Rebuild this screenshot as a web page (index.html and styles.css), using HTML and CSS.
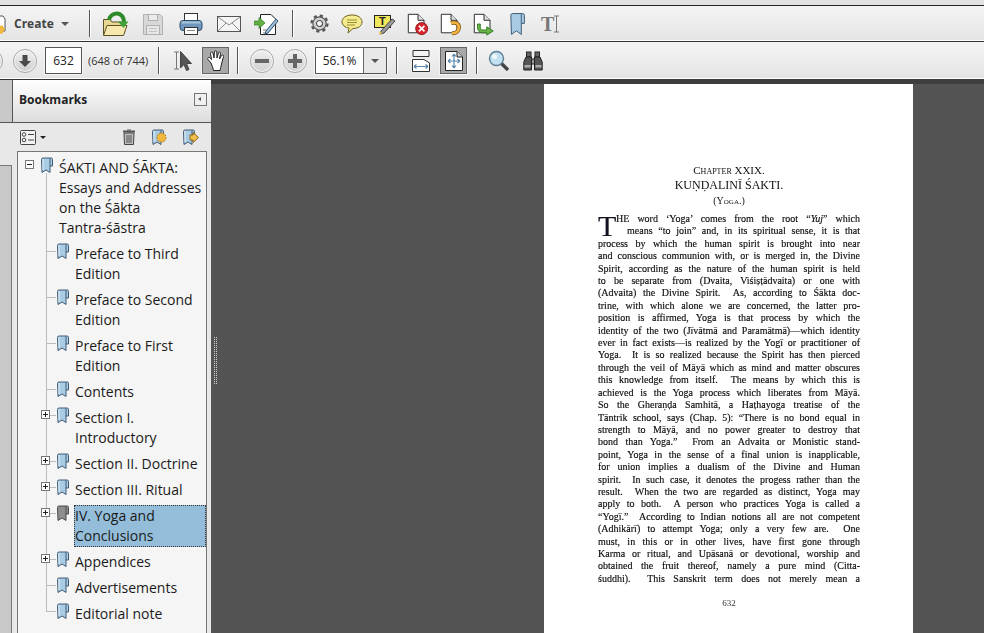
FILE: index.html
```html
<!DOCTYPE html>
<html>
<head>
    <title>Bookmarks viewer</title>
    <link rel="stylesheet" href="styles.css">
</head>
<body>
    <svg class="sprite">
        <symbol id="mark" viewBox="0 0 13 17">
            <path d="M1.5 2.5 Q1.5 1 3 1 H11 Q12.5 1 12.5 2.5 V9 H10 V15.5 L6 13 L2 15.5 Z" fill="#a9cbe4" stroke="#3f5a75"/>
            <path d="M10 1.5 V9" stroke="#3f5a75" fill="none"/>
            <path d="M3 2 V13" stroke="#e3f0f8" fill="none"/>
        </symbol>
        <symbol id="mark-grey" viewBox="0 0 13 17">
            <path d="M1.5 2.5 Q1.5 1 3 1 H11 Q12.5 1 12.5 2.5 V9 H10 V15.5 L6 13 L2 15.5 Z" fill="#8e8e8e" stroke="#4a4a4a"/>
            <path d="M10 1.5 V9" stroke="#4a4a4a" fill="none"/>
        </symbol>
        <symbol id="doc" viewBox="0 0 26 26">
            <path d="M2.5 2.5 H13 L19.5 9 V22.5 H2.5 Z" fill="#fff" stroke="#222"/>
            <path d="M13 2.5 V9 H19.5" fill="#ddd" stroke="#222"/>
        </symbol>
    </svg>

    <div class="topstrip"></div>

    <!-- Main toolbar -->
    <div class="toolbar">
        <svg class="create-icon" width="6" height="26" viewBox="0 0 6 26">
            <path d="M-6 5 H3 L5 8 V20 H-6 Z" fill="#fff" stroke="#555"/>
            <path d="M-2 16 L2 14 L5 18 L2 23 L-2 22 Z" fill="#f0b83c"/>
        </svg>
        <span class="create-label">Create</span>
        <span class="caret caret-create"></span>
        <span class="sep sep-create"></span>

        <span class="slot wide">
            <svg width="28" height="28" viewBox="0 0 28 28">
                <path d="M2.5 25 V9.5 H9 L11 12 H22 V16" fill="#e8d894" stroke="#5d5124"/>
                <path d="M2.5 25.5 L6 15.5 H26 L22.5 25.5 Z" fill="#f6e8ae" stroke="#5d5124"/>
                <path d="M8 10 C9 4 17 1 21 6 C23 8 23 11 23 13" fill="none" stroke="#2f8a2c" stroke-width="4"/>
                <path d="M17 11.5 H27.5 L22.5 18 Z" fill="#3ea437"/>
            </svg>
        </span>
        <span class="slot wide">
            <svg width="22" height="24" viewBox="0 0 22 24">
                <path d="M1.5 2.5 H18 L20.5 5 V22.5 H1.5 Z" fill="#d8d8d8" stroke="#b0b0b0"/>
                <rect x="6.5" y="2.5" width="9" height="6" fill="#ececec" stroke="#b0b0b0"/>
                <rect x="4.5" y="13.5" width="13" height="9" fill="#e6e6e6" stroke="#b0b0b0"/>
                <path d="M7 16.5 H15 M7 19.5 H15" stroke="#c4c4c4"/>
            </svg>
        </span>
        <span class="slot wide">
            <svg width="24" height="24" viewBox="0 0 24 24">
                <rect x="5.5" y="1.5" width="13" height="9" fill="#fff" stroke="#333"/>
                <rect x="1" y="8.5" width="22" height="10" rx="3" fill="#6f97bb" stroke="#2f4d69"/>
                <rect x="2.5" y="9.5" width="19" height="2" fill="#a8c5dc"/>
                <rect x="5.5" y="15.5" width="13" height="7" fill="#fff" stroke="#333"/>
                <path d="M8 18.5 H16" stroke="#888"/>
            </svg>
        </span>
        <span class="slot wide">
            <svg width="24" height="18" viewBox="0 0 24 18">
                <rect x="0.5" y="1.5" width="23" height="15" fill="#f4f4f4" stroke="#555"/>
                <path d="M1 2 L12 10 L23 2 M1 16 L9 8 M23 16 L15 8" fill="none" stroke="#8c8c8c"/>
            </svg>
        </span>
        <span class="slot wide-short">
            <svg width="24" height="24" viewBox="0 0 24 24">
                <path d="M6.5 2.5 H17 L21.5 7 V22.5 H6.5 Z" fill="#fff" stroke="#222"/>
                <path d="M0 9 H5 V5.5 L11 11 L5 16.5 V13 H0 Z" fill="#63b044" stroke="#2e7a22" stroke-width="0.7"/>
                <path d="M12 19 L22 7 L24 9 L14 21 L11 22 Z" fill="#9cc0dc" stroke="#35516e"/>
                <path d="M9 18 H13 M9 21 H11" stroke="#777"/>
            </svg>
        </span>
        <span class="sep sep-tools"></span>

        <span class="slot">
            <svg width="19" height="19" viewBox="0 0 20 20">
                <circle cx="10" cy="10" r="7" fill="#d2d2d2" stroke="#555" stroke-width="1.2"/>
                <circle cx="10" cy="10" r="8.4" fill="none" stroke="#555" stroke-width="2.4" stroke-dasharray="3.3 3.3"/>
                <circle cx="10" cy="10" r="3.2" fill="#f4f4f4" stroke="#555" stroke-width="1.2"/>
            </svg>
        </span>
        <span class="slot">
            <svg width="22" height="20" viewBox="0 0 22 20">
                <path d="M11 1 C17 1 21 4 21 8 C21 12 17 14.500 12 14.500 L7 19 L8 14 C4 13.500 1 11 1 8 C1 4 5 1 11 1 Z" fill="#f6ea8e" stroke="#6b6420"/>
                <path d="M6 6 H16 M6 8.500 H16 M6 11 H14" stroke="#9a8f35"/>
            </svg>
        </span>
        <span class="slot">
            <svg width="22" height="22" viewBox="0 0 22 22">
                <rect x="0.5" y="2.5" width="16" height="12" fill="#f2e85c" stroke="#222"/>
                <text class="note-t" x="5" y="12">T</text>
                <path d="M7 18 L18 6 L21 8 L10 20 L6 21 Z" fill="#9a9a9a" stroke="#444"/>
                <path d="M6 18 L8 21 L5 21.500 Z" fill="#eec23f"/>
            </svg>
        </span>
        <span class="slot">
            <svg width="24" height="24" viewBox="0 0 26 26">
                <use href="#doc"/>
                <circle cx="17" cy="18" r="6.500" fill="#d9262c" stroke="#8e1217"/>
                <path d="M14 15 L20 21 M20 15 L14 21" stroke="#fff" stroke-width="1.800"/>
            </svg>
        </span>
        <span class="slot">
            <svg width="24" height="24" viewBox="0 0 26 26">
                <use href="#doc"/>
                <path d="M13 12 C19 10 23 14 21 19 C20 22 17 23 14 23" fill="none" stroke="#8a5a14" stroke-width="4.500"/>
                <path d="M13 12 C19 10 23 14 21 19 C20 22 17 23 14 23" fill="none" stroke="#f2b544" stroke-width="2.800"/>
            </svg>
        </span>
        <span class="slot">
            <svg width="24" height="24" viewBox="0 0 26 26">
                <use href="#doc"/>
                <path d="M9 13 V17 C9 19 11 19.500 13 19.500 H16 V16 L23 20.500 L16 25 V22.500 H12 C8 22.500 6 20 6 17 V13 Z" fill="#69b548" stroke="#2f7a23"/>
            </svg>
        </span>
        <span class="slot">
            <svg width="16" height="24" viewBox="0 0 13 19">
                <path d="M1.500 2.500 Q1.500 1 3 1 H11 Q12.500 1 12.500 2.500 V9 H10 V18 L6 15 L2 18 Z" fill="#a9cbe4" stroke="#3f5a75" stroke-width="0.800"/>
                <path d="M10 1.500 V9" stroke="#3f5a75" stroke-width="0.800"/>
            </svg>
        </span>
        <span class="slot">
            <svg width="20" height="20" viewBox="0 0 20 20">
                <text class="tool-t" x="1" y="17">T</text>
                <path d="M14 2 H19 M16.500 2 V18 M14 18 H19" stroke="#777" fill="none"/>
            </svg>
        </span>
    </div>

    <!-- Page navigation toolbar -->
    <div class="toolbar navbar">
        <span class="round round-cut"></span>
        <span class="round round-down">
            <svg width="14" height="14" viewBox="0 0 14 14"><path d="M4.500 1 H9.500 V7 H13 L7 13 L1 7 H4.500 Z" fill="#4a4a4a"/></svg>
        </span>
        <span class="field page-field">632</span>
        <span class="page-count">(648 of 744)</span>
        <span class="sep sep-count"></span>
        <span class="slot select-slot">
            <svg width="20" height="22" viewBox="0 0 20 22">
                <path d="M1 2 H6 M3.500 2 V19 M1 19 H6" fill="none" stroke="#777"/>
                <path d="M7.500 1.500 V18 L11 14.500 L13.500 20.500 L16 19.500 L13.500 13.500 H18.500 Z" fill="#555" stroke="#444"/>
            </svg>
        </span>
        <span class="pressed hand-btn">
            <svg width="20" height="22" viewBox="0 0 20 22">
                <path d="M5 13 L2 9.500 C1 8 3 6.500 4.200 8 L5.500 9.500 L4.500 3.500 C4.500 2 6.500 1.500 7 3 L8 8 L8.500 1.800 C8.700 0.500 10.500 0.500 10.800 1.800 L11 8 L12.500 2.800 C13 1.500 14.800 2 14.500 3.500 L13.500 9 L15.500 5.500 C16.300 4.500 18 5.200 17.500 6.500 L15.500 14 C15 17 14.500 18 14 20.500 H7.500 C7 18 6.200 15.500 5 13 Z" fill="#fff" stroke="#222"/>
            </svg>
        </span>
        <span class="sep sep-hand"></span>
        <span class="round round-minus"><span class="glyph-minus"></span></span>
        <span class="round round-plus"><span class="glyph-minus"></span><span class="glyph-plus"></span></span>
        <span class="zoom-box">
            <span class="zoom-value">56.1%</span>
            <span class="zoom-drop"><span class="caret"></span></span>
        </span>
        <span class="sep sep-zoom"></span>
        <span class="slot fit-slot">
            <svg width="18" height="22" viewBox="0 0 18 22">
                <path d="M1 0.500 H17 V6.500 H1 Z" fill="#f4f4f4" stroke="#333"/>
                <path d="M0.500 9.500 H12 L17.500 13 V21.500 H0.500 Z" fill="#fff" stroke="#333"/>
                <path d="M2 16.500 H16 M2 16.500 L4.500 14.500 M2 16.500 L4.500 18.500 M16 16.500 L13.500 14.500 M16 16.500 L13.500 18.500" fill="none" stroke="#5a86ad" stroke-width="1.200"/>
            </svg>
        </span>
        <span class="pressed fit-btn">
            <svg width="18" height="20" viewBox="0 0 18 20">
                <path d="M0.500 0.500 H12 L17.500 6 V19.500 H0.500 Z" fill="#fff" stroke="#222"/>
                <path d="M12 0.500 V6 H17.500" fill="#ccc" stroke="#222"/>
                <path d="M9 3 V17 M3 10 H15 M9 3 L7 5.500 M9 3 L11 5.500 M9 17 L7 14.500 M9 17 L11 14.500 M3 10 L5.500 8 M3 10 L5.500 12 M15 10 L12.500 8 M15 10 L12.500 12" fill="none" stroke="#5a86ad" stroke-width="1.200"/>
            </svg>
        </span>
        <span class="sep sep-fit"></span>
        <span class="slot find-slot">
            <svg width="22" height="22" viewBox="0 0 22 22">
                <path d="M13 13 L20 20" stroke="#444" stroke-width="3.400"/>
                <circle cx="8.500" cy="8.500" r="7" fill="#c2e2f2" stroke="#5d7e94" stroke-width="1.400"/>
                <circle cx="6.500" cy="6.500" r="2.500" fill="#eef8fc"/>
            </svg>
        </span>
        <span class="slot binoc-slot">
            <svg width="20" height="20" viewBox="0 0 20 20">
                <rect x="3.500" y="1" width="4.500" height="5" fill="#666" stroke="#222"/>
                <rect x="12" y="1" width="4.500" height="5" fill="#666" stroke="#222"/>
                <path d="M3 6 H8.500 V19 H0.800 V11 Z M17 6 H11.500 V19 H19.200 V11 Z" fill="#555" stroke="#222"/>
                <rect x="8.500" y="8" width="3" height="5" fill="#999" stroke="#222"/>
                <rect x="1.500" y="14" width="6" height="2.500" fill="#aaa"/>
                <rect x="12.500" y="14" width="6" height="2.500" fill="#aaa"/>
            </svg>
        </span>
    </div>

    <div class="main">
        <div class="rail">
            <div class="rail-top"></div>
            <div class="rail-gap"></div>
            <div class="rail-tab"></div>
        </div>

        <div class="panel">
            <div class="panel-head">
                <span class="panel-title">Bookmarks</span>
                <span class="collapse-btn"></span>
            </div>
            <div class="panel-tools">
                <span class="options-btn">
                    <svg width="16" height="15" viewBox="0 0 16 15">
                        <rect x="0.500" y="0.500" width="15" height="14" rx="1" fill="#f2f2f2" stroke="#444"/>
                        <circle cx="4" cy="4.500" r="1.800" fill="none" stroke="#444"/>
                        <circle cx="4" cy="10" r="1.800" fill="none" stroke="#444"/>
                        <path d="M8 4.500 H14 M8 10 H14" stroke="#444"/>
                    </svg>
                    <span class="caret caret-small"></span>
                </span>
                <span class="panel-tool tool-trash">
                    <svg width="14" height="16" viewBox="0 0 14 16">
                        <path d="M1 2.500 H13" stroke="#555" stroke-width="2"/>
                        <path d="M5 1 H9" stroke="#555"/>
                        <path d="M2 4 H12 L11.500 15.500 H2.500 Z" fill="#bdbdbd" stroke="#444"/>
                        <path d="M5 6 V14 M7 6 V14 M9 6 V14" stroke="#555"/>
                    </svg>
                </span>
                <span class="panel-tool tool-new">
                    <svg width="16" height="17" viewBox="0 0 16 17">
                        <use href="#mark" width="13" height="17"/>
                        <circle cx="10.500" cy="8.500" r="4.500" fill="#f2b73d" stroke="#a9781c" stroke-dasharray="2 1"/>
                    </svg>
                </span>
                <span class="panel-tool tool-go">
                    <svg width="17" height="17" viewBox="0 0 17 17">
                        <use href="#mark" width="13" height="17"/>
                        <path d="M8 6 H11 V3.500 L16.500 8.500 L11 13.500 V11 H8 Z" fill="#f2c04a" stroke="#8a6414"/>
                    </svg>
                </span>
            </div>

            <div class="tree">
                <div class="row root">
                    <span class="toggle open"></span>
                    <svg class="mark" width="13" height="17"><use href="#mark"/></svg>
                    <span class="label">ŚAKTI AND ŚĀKTA: Essays and Addresses on the Śākta<br>Tantra-śāstra</span>
                </div>
                <div class="children">
                    <div class="row leaf">
                        <svg class="mark" width="13" height="17"><use href="#mark"/></svg>
                        <span class="label">Preface to Third Edition</span>
                    </div>
                    <div class="row leaf">
                        <svg class="mark" width="13" height="17"><use href="#mark"/></svg>
                        <span class="label">Preface to Second Edition</span>
                    </div>
                    <div class="row leaf">
                        <svg class="mark" width="13" height="17"><use href="#mark"/></svg>
                        <span class="label">Preface to First Edition</span>
                    </div>
                    <div class="row leaf">
                        <svg class="mark" width="13" height="17"><use href="#mark"/></svg>
                        <span class="label">Contents</span>
                    </div>
                    <div class="row">
                        <span class="toggle"></span>
                        <svg class="mark" width="13" height="17"><use href="#mark"/></svg>
                        <span class="label">Section I. Introductory</span>
                    </div>
                    <div class="row">
                        <span class="toggle"></span>
                        <svg class="mark" width="13" height="17"><use href="#mark"/></svg>
                        <span class="label">Section II. Doctrine</span>
                    </div>
                    <div class="row">
                        <span class="toggle"></span>
                        <svg class="mark" width="13" height="17"><use href="#mark"/></svg>
                        <span class="label">Section III. Ritual</span>
                    </div>
                    <div class="row">
                        <span class="toggle"></span>
                        <svg class="mark" width="13" height="17"><use href="#mark-grey"/></svg>
                        <span class="label selected">IV. Yoga and Conclusions</span>
                    </div>
                    <div class="row">
                        <span class="toggle"></span>
                        <svg class="mark" width="13" height="17"><use href="#mark"/></svg>
                        <span class="label">Appendices</span>
                    </div>
                    <div class="row leaf">
                        <svg class="mark" width="13" height="17"><use href="#mark"/></svg>
                        <span class="label">Advertisements</span>
                    </div>
                    <div class="row leaf last">
                        <svg class="mark" width="13" height="17"><use href="#mark"/></svg>
                        <span class="label">Editorial note</span>
                    </div>
                </div>
            </div>
        </div>

        <div class="doc">
            <span class="grip"></span>
            <div class="page">
                <div class="chapter">Chapter XXIX.</div>
                <div class="title">KUṆḌALINĪ ŚAKTI.</div>
                <div class="subtitle">(Yoga.)</div>
                <p class="body-text">
                    <span class="dropcap">T</span>
                    <span class="line">HE word ‘Yoga’ comes from the root “<i>Yuj</i>” which</span>
                    <span class="line second">means “to join” and, in its spiritual sense, it is that</span>
                    <span class="line">process by which the human spirit is brought into near</span>
                    <span class="line">and conscious communion with, or is merged in, the Divine</span>
                    <span class="line">Spirit, according as the nature of the human spirit is held</span>
                    <span class="line">to be separate from (Dvaita, Viśiṣṭādvaita) or one with</span>
                    <span class="line">(Advaita) the Divine Spirit.&nbsp; As, according to Śākta doc-</span>
                    <span class="line">trine, with which alone we are concerned, the latter pro-</span>
                    <span class="line">position is affirmed, Yoga is that process by which the</span>
                    <span class="line">identity of the two (Jīvātmā and Paramātmā)—which identity</span>
                    <span class="line">ever in fact exists—is realized by the Yogī or practitioner of</span>
                    <span class="line">Yoga.&nbsp; It is so realized because the Spirit has then pierced</span>
                    <span class="line">through the veil of Māyā which as mind and matter obscures</span>
                    <span class="line">this knowledge from itself.&nbsp; The means by which this is</span>
                    <span class="line">achieved is the Yoga process which liberates from Māyā.</span>
                    <span class="line">So the Gheraṇḍa Samhitā, a Haṭhayoga treatise of the</span>
                    <span class="line">Tāntrik school, says (Chap. 5): “There is no bond equal in</span>
                    <span class="line">strength to Māyā, and no power greater to destroy that</span>
                    <span class="line">bond than Yoga.”&nbsp; From an Advaita or Monistic stand-</span>
                    <span class="line">point, Yoga in the sense of a final union is inapplicable,</span>
                    <span class="line">for union implies a dualism of the Divine and Human</span>
                    <span class="line">spirit.&nbsp; In such case, it denotes the progess rather than the</span>
                    <span class="line">result.&nbsp; When the two are regarded as distinct, Yoga may</span>
                    <span class="line">apply to both.&nbsp; A person who practices Yoga is called a</span>
                    <span class="line">“Yogī.”&nbsp; According to Indian notions all are not competent</span>
                    <span class="line">(Adhikārī) to attempt Yoga; only a very few are.&nbsp; One</span>
                    <span class="line">must, in this or in other lives, have first gone through</span>
                    <span class="line">Karma or ritual, and Upāsanā or devotional, worship and</span>
                    <span class="line">obtained the fruit thereof, namely a pure mind (Citta-</span>
                    <span class="line">śuddhi).&nbsp; This Sanskrit term does not merely mean a</span>
                </p>
                <div class="folio">632</div>
            </div>
        </div>
    </div>
</body>
</html>
```

FILE: styles.css
```css
html, body {
    margin: 0;
    height: 633px;
    overflow: hidden;
}
body {
    font-family: "Open Sans", "Noto Sans", sans-serif;
    background-color: #535353;
    display: flex;
    flex-direction: column;
}
.sprite { display: none; }

/* Toolbars */
.topstrip {
    height: 5px;
    background-color: #e3e3e3;
    border-bottom: 1px solid #222;
}
.toolbar {
    height: 35px;
    display: flex;
    align-items: center;
    background: linear-gradient(#f5f5f5, #e4e4e4);
    border-bottom: 1px solid #333;
    box-shadow: inset 0 -1px 0 #fff;
    flex-shrink: 0;
}
.navbar {
    height: 37px;
    border-bottom: 0;
    box-shadow: inset 0 -1px 0 #fff;
}
.create-icon { flex-shrink: 0; }
.create-label {
    margin-left: 8px;
    font-size: 12px;
    font-weight: 700;
    color: #444;
}
.caret {
    display: inline-block;
    width: 0;
    height: 0;
    border-left: 4px solid transparent;
    border-right: 4px solid transparent;
    border-top: 4px solid #555;
}
.caret-create { margin-left: 7px; }
.sep {
    width: 1px;
    height: 27px;
    background-color: #555;
    box-shadow: 1px 0 0 #fff;
    flex-shrink: 0;
}
.sep-create { margin-left: 20px; margin-right: 6px; }
.sep-tools { margin-left: 7px; margin-right: 10px; }
.slot {
    width: 33px;
    display: flex;
    align-items: center;
    justify-content: center;
    flex-shrink: 0;
}
.slot.wide { width: 38px; }
.slot.wide-short { width: 37px; }
.note-t {
    font-family: "Liberation Sans", sans-serif;
    font-size: 11px;
    font-weight: 700;
    fill: #222;
}
.tool-t {
    font-family: "Liberation Serif", serif;
    font-size: 20px;
    font-weight: 700;
    fill: #777;
}

/* Navigation row */
.round {
    width: 22px;
    height: 22px;
    border: 1px solid #a8a8a8;
    border-radius: 50%;
    background: linear-gradient(#f0f0f0, #cfcfcf);
    box-shadow: inset 0 0 0 1px #f8f8f8;
    display: flex;
    align-items: center;
    justify-content: center;
    flex-shrink: 0;
    position: relative;
}
.round-cut { margin-left: -21px; }
.round-down { margin-left: 10px; }
.field {
    width: 35px;
    height: 25px;
    margin-left: 8px;
    border: 1px solid #555;
    background-color: #fff;
    box-shadow: 0 0 0 1px #f4f4f4;
    font-size: 12px;
    line-height: 25px;
    text-align: center;
    color: #222;
    flex-shrink: 0;
}
.page-count {
    width: 62px;
    margin-left: 6px;
    font-size: 11px;
    color: #333;
    white-space: nowrap;
    flex-shrink: 0;
}
.sep-count { margin-left: 8px; }
.select-slot { margin-left: 7px; }
.pressed {
    width: 25px;
    height: 25px;
    background-color: #a8a8a8;
    border: 1px solid #666;
    box-shadow: 0 0 0 1px #f4f4f4;
    display: flex;
    align-items: center;
    justify-content: center;
    flex-shrink: 0;
}
.hand-btn { margin-left: 3px; }
.sep-hand { margin-left: 8px; }
.round-minus { margin-left: 12px; }
.round-plus { margin-left: 9px; }
.glyph-minus {
    width: 14px;
    height: 4px;
    background-color: #666;
}
.glyph-plus {
    position: absolute;
    left: 9px;
    top: 4px;
    width: 4px;
    height: 14px;
    background-color: #666;
}
.zoom-box {
    width: 70px;
    height: 25px;
    margin-left: 8px;
    border: 1px solid #555;
    background-color: #fff;
    box-shadow: 0 0 0 1px #f4f4f4;
    display: flex;
    flex-shrink: 0;
}
.zoom-value {
    flex: 1;
    font-size: 12px;
    line-height: 25px;
    text-align: center;
    color: #222;
}
.zoom-drop {
    width: 22px;
    border-left: 1px solid #666;
    background-color: #e8e8e8;
    display: flex;
    align-items: center;
    justify-content: center;
}
.sep-zoom { margin-left: 9px; }
.fit-slot { margin-left: 7px; }
.fit-btn { margin-left: 3px; }
.sep-fit { margin-left: 9px; }
.find-slot { margin-left: 5px; }
.binoc-slot { margin-left: 1px; }

/* Main area */
.main {
    flex: 1;
    display: flex;
    min-height: 0;
}
.rail {
    width: 12px;
    display: flex;
    flex-direction: column;
    flex-shrink: 0;
    background-color: #e8e8e8;
}
.rail-top {
    height: 42px;
    background-color: #c8c8c8;
    border-top: 1px solid #333;
    border-bottom: 1px solid #555;
}
.rail-gap { height: 42px; }
.rail-tab {
    flex: 1;
    background-color: #c8c8c8;
    border-top: 1px solid #777;
    border-right: 1px solid #777;
}
.panel {
    width: 199px;
    flex-shrink: 0;
    background-color: #e8e8e8;
    overflow: hidden;
    display: flex;
    flex-direction: column;
}
.panel-head {
    height: 38px;
    display: flex;
    align-items: center;
    justify-content: space-between;
    padding: 0 4px 4px 6px;
    background: linear-gradient(#fff, #dcdcdc);
    border-top: 1px solid #333;
    border-left: 1px solid #555;
    border-bottom: 1px solid #555;
    flex-shrink: 0;
}
.panel-title {
    font-size: 12px;
    font-weight: 700;
    color: #222;
}
.collapse-btn {
    width: 11px;
    height: 11px;
    border: 1px solid #777;
    background-color: #f0f0f0;
    position: relative;
}
.collapse-btn::after {
    content: "";
    position: absolute;
    left: 3px;
    top: 3px;
    border-top: 2.5px solid transparent;
    border-bottom: 2.5px solid transparent;
    border-right: 3px solid #555;
}
.panel-tools {
    height: 28px;
    display: flex;
    align-items: center;
    padding-left: 8px;
    flex-shrink: 0;
}
.options-btn {
    display: flex;
    align-items: center;
    gap: 4px;
}
.caret-small {
    border-left-width: 3px;
    border-right-width: 3px;
    border-top: 3px solid #222;
}
.panel-tool {
    display: flex;
    align-items: center;
}
.tool-trash { margin-left: 76px; }
.tool-new { margin-left: 15px; }
.tool-go { margin-left: 15px; }

/* Bookmark tree */
.tree {
    flex: 1;
    margin-left: 5px;
    width: 188px;
    border: 1px solid #777;
    border-bottom: 0;
    background-color: #f5f5f5;
    padding-top: 3px;
    font-size: 14px;
    line-height: 20px;
    color: #1a1a1a;
}
.row {
    display: flex;
    align-items: flex-start;
    padding: 2px 0;
    position: relative;
}
.root { padding-left: 7px; }
.root::after {
    content: "";
    position: absolute;
    left: 28px;
    top: 18px;
    bottom: 0;
    width: 1px;
    background-color: #bbb;
}
.children .row { padding-left: 23px; }
.children .row::before {
    content: "";
    position: absolute;
    left: 28px;
    top: 0;
    bottom: 0;
    width: 1px;
    background-color: #bbb;
}
.children .row::after {
    content: "";
    position: absolute;
    left: 28px;
    top: 10px;
    width: 10px;
    height: 1px;
    background-color: #bbb;
}
.children .row.last::before { bottom: auto; height: 10px; }
.toggle {
    width: 9px;
    height: 9px;
    margin-top: 3px;
    margin-right: 6px;
    border: 1px solid #777;
    background-color: #fff;
    flex-shrink: 0;
    box-sizing: border-box;
    position: relative;
    z-index: 1;
    background-image: linear-gradient(#222, #222), linear-gradient(#222, #222);
    background-size: 5px 1px, 1px 5px;
    background-position: center, center;
    background-repeat: no-repeat;
}
.toggle.open {
    background-size: 5px 1px, 0 0;
}
.mark {
    flex-shrink: 0;
    margin-right: 5px;
    position: relative;
    z-index: 1;
}
.leaf .mark { margin-left: 15px; }
.label {
    flex: 1;
    border: 1px dotted transparent;
    min-width: 0;
}
.label.selected {
    background-color: #94bdd9;
    border-color: #333;
}

/* Document */
.doc {
    flex: 1;
    min-width: 0;
    padding-left: 333px;
    background: linear-gradient(#3e3e3e 5px, #535353 5px);
    overflow: hidden;
    position: relative;
}
.grip {
    position: absolute;
    left: 2px;
    top: 258px;
    width: 4px;
    height: 47px;
    background-image: conic-gradient(#d8d8d8 25%, transparent 0);
    background-size: 2px 2px;
}
.page {
    width: 369px;
    height: 600px;
    margin-top: 5px;
    padding: 78px 53px 0 54px;
    box-sizing: border-box;
    background-color: #fff;
    font-family: "Liberation Serif", serif;
    color: #111;
    text-align: center;
    filter: blur(0.25px);
}
.chapter, .subtitle {
    font-variant: small-caps;
    line-height: 16px;
}
.chapter { font-size: 11px; }
.subtitle { font-size: 10px; }
.title {
    font-size: 12px;
    line-height: 15px;
}
.body-text {
    margin: 4px 0 0;
    font-size: 10px;
    line-height: 12.41px;
    -webkit-text-stroke: 0.15px #000;
}
.line {
    display: block;
    white-space: nowrap;
    text-align: justify;
    text-align-last: justify;
}
.line.second { padding-left: 29px; }
.dropcap {
    float: left;
    width: 18px;
    height: 24px;
    font-size: 30px;
    line-height: 26px;
    text-align: left;
    color: #112;
}
.folio {
    margin-top: 12px;
    font-size: 9px;
    line-height: 12px;
    color: #333;
}
```
